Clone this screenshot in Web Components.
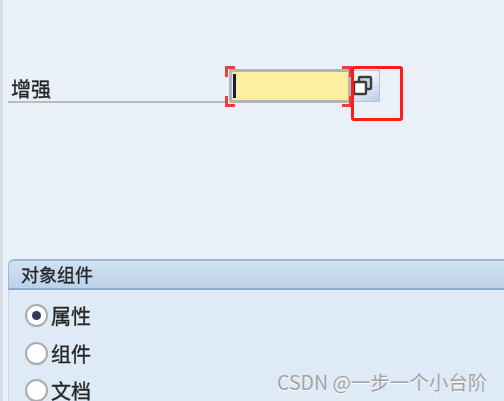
<!DOCTYPE html>
<html>
<head>
<meta charset="utf-8">
<style>
  html, body { margin: 0; height: 100%; }
  body { overflow: hidden; background: #e9f0f7; font-family: "Noto Sans CJK SC", "Liberation Sans", sans-serif; }
</style>
</head>
<body>
<sap-screen>
  <sap-field label="增强"></sap-field>
  <sap-group title="对象组件">
    <sap-radio checked>属性</sap-radio>
    <sap-radio>组件</sap-radio>
    <sap-radio>文档</sap-radio>
  </sap-group>
  <water-mark slot="overlay">CSDN @一步一个小台阶</water-mark>
</sap-screen>

<script>
class SapScreen extends HTMLElement {
  constructor() {
    super();
    this.attachShadow({ mode: "open" }).innerHTML = `
      <style>
        :host {
          display: flex;
          flex-direction: column;
          position: relative;
          box-sizing: border-box;
          width: 504px;
          height: 401px;
          overflow: hidden;
          padding: 67px 0 0 5px;
          border-left: 3px solid #d5dce8;
          color: #222;
        }
      </style>
      <slot></slot>
      <slot name="overlay"></slot>
    `;
  }
}

class SapField extends HTMLElement {
  constructor() {
    super();
    this.attachShadow({ mode: "open" }).innerHTML = `
      <style>
        :host { display: flex; align-items: flex-start; height: 192px; flex: none; }
        .label {
          box-sizing: border-box;
          width: 220px;
          height: 36px;
          padding: 8px 0 0 3px;
          border-bottom: 2px solid #b9bcc0;
          font-size: 20px;
          line-height: 28px;
          color: #262626;
        }
        .label span { display: inline-block; filter: blur(0.45px); -webkit-text-stroke: 0.35px #262626; }
        .input {
          position: relative;
          box-sizing: border-box;
          width: 122px;
          height: 34px;
          margin: 2px 0 0 1px;
          background: #fdeea0;
          border: 3px solid #b3b5b3;
          border-radius: 2px;
        }
        .caret {
          position: absolute;
          left: 1px; top: 2px;
          width: 3px; height: 24px;
          background: #14185e;
        }
        .mark {
          position: absolute;
          width: 7px; height: 8px;
          border: 0 solid #e8403a;
        }
        .tl { left: -7px; top: -6px; border-width: 3px 0 0 3px; }
        .bl { left: -7px; bottom: -7px; border-width: 0 0 3px 3px; }
        .tr { right: -4px; top: -6px; border-width: 3px 3px 0 0; }
        .br { right: -4px; bottom: -7px; border-width: 0 3px 3px 0; }
        .help {
          box-sizing: border-box;
          width: 30px;
          height: 32px;
          margin: 3px 0 0 -1px;
          display: flex;
          align-items: center;
          padding: 0 0 1px 2px;
          background: linear-gradient(150deg, #f0f4fa 35%, #b9cde6);
          border: 1px solid #b9c2ce;
          border-left: 0;
        }
        .frame {
          position: absolute;
          left: 348px; top: 66px;
          box-sizing: border-box;
          width: 52px; height: 55px;
          border: 3px solid #fb1d17;
          border-radius: 3px;
        }
      </style>
      <div class="label"><span></span></div>
      <div class="input">
        <i class="caret"></i>
        <i class="mark tl"></i><i class="mark bl"></i><i class="mark tr"></i><i class="mark br"></i>
      </div>
      <div class="help">
        <svg width="21" height="21" viewBox="0 0 21 21">
          <rect x="7" y="2" width="12" height="12" rx="1" fill="#c9d3df" stroke="#3c3c3c" stroke-width="2.4"/>
          <rect x="2" y="7" width="12" height="12" rx="1" fill="#fff" stroke="#3c3c3c" stroke-width="2.4"/>
        </svg>
      </div>
      <div class="frame"></div>
    `;
  }
  connectedCallback() {
    this.shadowRoot.querySelector(".label span").textContent = this.getAttribute("label");
  }
}

class SapGroup extends HTMLElement {
  constructor() {
    super();
    this.attachShadow({ mode: "open" }).innerHTML = `
      <style>
        :host { display: block; flex: 1; background: #deeaf5; border-radius: 6px 0 0 0; }
        .head {
          box-sizing: border-box;
          height: 31px;
          padding-left: 12px;
          border-top: 2px solid #9db8d6;
          border-left: 1px solid #9db8d6;
          border-bottom: 2px solid #8fabcc;
          border-radius: 6px 0 0 0;
          background: linear-gradient(#d0e0f1, #bdd3ea);
          font-size: 18px;
          line-height: 27px;
          color: #262626;
        }
        .head span { display: inline-block; filter: blur(0.45px); -webkit-text-stroke: 0.3px #262626; }
        .body {
          display: flex;
          flex-direction: column;
          gap: 8.5px;
          padding: 11px 0 0 16px;
          border-left: 1px solid #c8d6e6;
        }
      </style>
      <div class="head"><span></span></div>
      <div class="body"><slot></slot></div>
    `;
  }
  connectedCallback() {
    this.shadowRoot.querySelector(".head span").textContent = this.getAttribute("title");
  }
}

class SapRadio extends HTMLElement {
  constructor() {
    super();
    this.attachShadow({ mode: "open" }).innerHTML = `
      <style>
        :host {
          display: flex;
          align-items: center;
          height: 29px;
          font-size: 20px;
          color: #262626;
        }
        .dot {
          box-sizing: border-box;
          flex: none;
          width: 23px; height: 23px;
          margin-right: 3px;
          border-radius: 50%;
          border: 2px solid #a9acb0;
          background: #fff;
          display: flex;
          align-items: center;
          justify-content: center;
          filter: blur(0.4px);
        }
        .dot i { display: none; width: 9px; height: 9px; border-radius: 50%; background: #34385f; }
        :host([checked]) .dot i { display: block; }
        .text { filter: blur(0.45px); -webkit-text-stroke: 0.35px #262626; }
      </style>
      <span class="dot"><i></i></span><span class="text"><slot></slot></span>
    `;
  }
}

class WaterMark extends HTMLElement {
  constructor() {
    super();
    this.attachShadow({ mode: "open" }).innerHTML = `
      <style>
        :host {
          position: absolute;
          left: 274px; top: 368px;
          font-size: 19.5px;
          line-height: 28px;
          white-space: nowrap;
          color: #a0a3a6;
          text-shadow: 0 1px 1px #fff;
        }
      </style>
      <slot></slot>
    `;
  }
}

customElements.define("sap-screen", SapScreen);
customElements.define("sap-field", SapField);
customElements.define("sap-group", SapGroup);
customElements.define("sap-radio", SapRadio);
customElements.define("water-mark", WaterMark);
</script>
</body>
</html>
